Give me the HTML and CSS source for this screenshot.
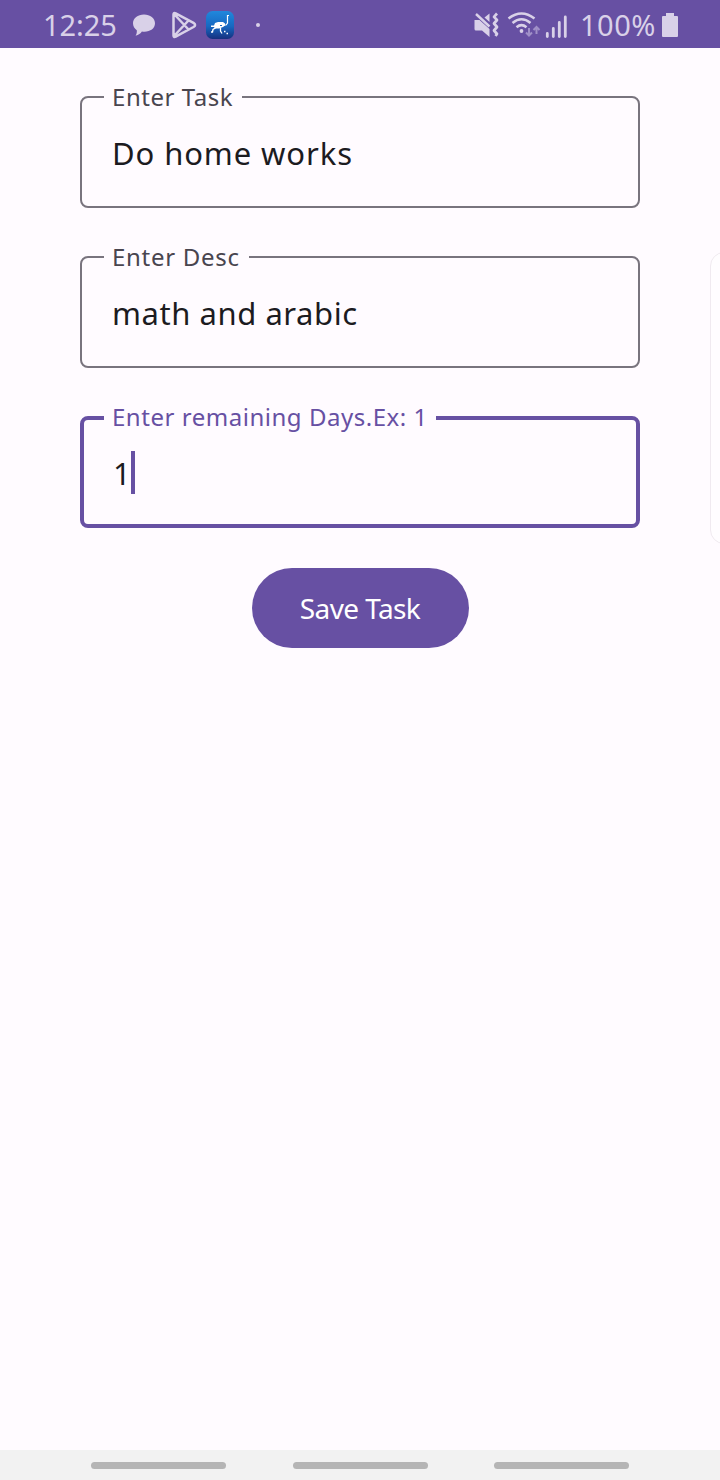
FILE: index.html
```html
<!DOCTYPE html>
<html lang="en">
<head>
<meta charset="utf-8">
<title>Save Task</title>
<link rel="stylesheet" href="styles.css">
</head>
<body>
<header class="status">
  <span class="clock">12:25</span>
  <svg class="chat" width="24" height="24" viewBox="0 0 24 24"><path d="M12 1.500C5.800 1.500 1 5 1 10.300c0 3 1.400 5.200 3.800 6.900C5 19.300 4.600 21 3.600 22.800c3-.8 5-2.300 6.300-4.300C17 19.500 23 16.300 23 10.300 23 5 18.200 1.500 12 1.500Z" fill="#d9d1e8"/></svg>
  <svg class="play" width="26" height="28" viewBox="0 0 26 28" fill="none" stroke="#d9d1e8" stroke-width="2.500" stroke-linejoin="round" stroke-linecap="round"><path d="M2.500 3.500Q2.500 1.300 4.700 2.300L22.500 11.900Q25.700 14 22.500 16L4.700 25.700Q2.500 26.700 2.500 24.500ZM3.500 3.500L17.500 18.500M3.500 24.500L17.500 9.500"/></svg>
  <svg class="app" width="28" height="28" viewBox="0 0 28 28">
    <defs><linearGradient id="sky" x2="0" y2="1"><stop offset="0" stop-color="#2188dc"/><stop offset=".55" stop-color="#1768c1"/><stop offset="1" stop-color="#16307f"/></linearGradient></defs>
    <rect width="28" height="28" rx="6.500" fill="url(#sky)"/>
    <path d="M9 12l3-1h5l2 1.500v2l-2 1.500-4 1.500H9L8 16H5v-1.500h3Z" fill="#fff"/>
    <path d="M18 14h2l1.500-2V8.500L21.500 7V4.500H23" fill="none" stroke="#fff" stroke-width="1.200"/>
    <path d="M10 16.500L7 18.500 6.500 21H5M14.500 17v3l1.500 2.500M18 20.500h1.500M20.500 22.500H22" fill="none" stroke="#fff" stroke-width="1.300"/>
    <path d="M14 14.500h2" stroke="#1768c1"/>
  </svg>
  <span class="dot"></span>
  <svg class="mute" width="26" height="26" viewBox="0 0 26 26"><path d="M.5 8h5L15.500 17v8L8 18.500H2Q.5 18.500.5 17ZM15.500 1.500V10l-5-4.500Z" fill="#d9d1e8"/><path d="M2 2L15.500 14.500" stroke="#d9d1e8" stroke-width="2.400"/><path d="M23 1.500L20 4.800l3 3.200-3 3.500 3 3.500-3 3.500 3 3.500-1.500 2" fill="none" stroke="#d9d1e8" stroke-width="2.700" stroke-linejoin="round"/></svg>
  <svg class="wifi" width="34" height="26" viewBox="0 0 34 26"><g fill="none" stroke="#d9d1e8" stroke-width="2.500"><path d="M1.500 6.500Q14.500-3.500 27.500 6.500M5.500 11Q14.500 3.500 23.500 11M9.500 15.200Q14.500 11 19.500 15.200"/></g><circle cx="14.500" cy="19" r="1.900" fill="#d9d1e8"/><path d="M22 16v7M19 20.500l3 3 3-3M29.500 22v-7M26.500 18l3-3 3 3" fill="none" stroke="#a090c8" stroke-width="2"/></svg>
  <svg class="signal" width="24" height="24" viewBox="0 0 24 24" stroke="#d9d1e8" stroke-width="2.800" stroke-linecap="round"><path d="M2.300 18.500v3M8.300 13.500v8M14.300 7.500v14M20.300 2v19.500"/></svg>
  <span class="percent">100%</span>
  <svg class="battery" width="16" height="24" viewBox="0 0 16 24"><path d="M4 0h8v3h3q1 0 1 1v19q0 1-1 1H1q-1 0-1-1V4q0-1 1-1h3Z" fill="#d9d1e8"/></svg>
</header>
<main class="form">
  <fieldset class="field">
    <legend class="label task">Enter Task</legend>
    <div class="value home">Do home works</div>
  </fieldset>
  <fieldset class="field">
    <legend class="label desc">Enter Desc</legend>
    <div class="value math">math and arabic</div>
  </fieldset>
  <fieldset class="field focused">
    <legend class="label days">Enter remaining Days.Ex: 1</legend>
    <div class="value"><span class="digit">1</span><span class="caret"></span></div>
  </fieldset>
  <button class="save">Save Task</button>
</main>
<aside class="edge-panel"></aside>
<nav class="navbar"><span class="hint"></span><span class="hint"></span><span class="hint"></span></nav>
</body>
</html>
```
FILE: styles.css
```css
* { box-sizing: border-box; }
body {
  margin: 0;
  width: 720px;
  height: 1480px;
  display: flex;
  flex-direction: column;
  position: relative;
  overflow: hidden;
  background: #fffbff;
  font-family: "Noto Sans", sans-serif;
}
.status {
  height: 48px;
  flex: none;
  display: flex;
  align-items: center;
  padding: 2px 42px 0 43px;
  background: #6750a3;
  color: #d9d1e8;
  font-size: 29px;
  line-height: 44px;
  white-space: nowrap;
}
.status svg { flex: none; display: block; }
.clock { width: 89px; letter-spacing: -0.1px; }
.play { margin-left: 15px; }
.app { margin-left: 9px; }
.dot { width: 4px; height: 4px; border-radius: 2px; background: #d9d1e8; margin-left: 22px; }
.mute { margin-left: auto; }
.wifi { margin-left: 7px; }
.signal { margin-left: 4px; margin-top: 3px; }
.percent { width: 76px; margin-left: 11px; letter-spacing: 0.5px; }
.battery { margin-left: 6px; }
.form {
  flex: 1;
  display: flex;
  flex-direction: column;
  align-items: center;
  padding-top: 33px;
}
.field {
  width: 560px;
  height: 127px;
  margin: 0 0 33px;
  padding: 0 22px;
  border: 2px solid #79747e;
  border-radius: 8px;
}
.label {
  height: 32px;
  padding: 0 8px;
  font-size: 24px;
  line-height: 32px;
  color: #49454f;
  white-space: nowrap;
}
.task { width: 138px; letter-spacing: 0.55px; }
.desc { width: 145px; letter-spacing: 0.7px; }
.days { width: 332px; letter-spacing: 0.53px; }
.value {
  display: flex;
  align-items: center;
  height: 44px;
  margin-top: 18px;
  padding-left: 8px;
  font-size: 31px;
  line-height: 44px;
  color: #1c1b1f;
  white-space: nowrap;
}
.home { letter-spacing: 0.9px; }
.math { letter-spacing: 0.55px; }
.focused {
  height: 126px;
  margin: 1px 0 40px;
  padding: 0 20px;
  border: 4px solid #6750a3;
}
.focused .label { color: #6750a3; line-height: 30px; }
.focused .value { margin-top: 16px; }
.digit { width: 19px; padding: 1px 0 0 1px; }
.caret { width: 4px; height: 43px; background: #6750a3; }
.save {
  width: 217px;
  height: 80px;
  margin-left: 1px;
  padding: 0 1px 0 0;
  border: 0;
  border-radius: 40px;
  background: #6750a3;
  color: #fff;
  font: 400 28px/40px "Noto Sans", sans-serif;
  letter-spacing: -0.6px;
  white-space: nowrap;
}
.edge-panel {
  position: absolute;
  left: 710px;
  top: 252px;
  width: 30px;
  height: 292px;
  border: 1px solid #f0eaf0;
  border-radius: 14px;
  background: #fffdff;
}
.navbar {
  height: 30px;
  flex: none;
  display: grid;
  grid-template-columns: 135px 135px 135px;
  column-gap: 66.500px;
  align-items: center;
  padding-left: 91px;
  background: #f2f2f2;
}
.hint { height: 7px; border-radius: 4px; background: #b5b5b5; }
```
